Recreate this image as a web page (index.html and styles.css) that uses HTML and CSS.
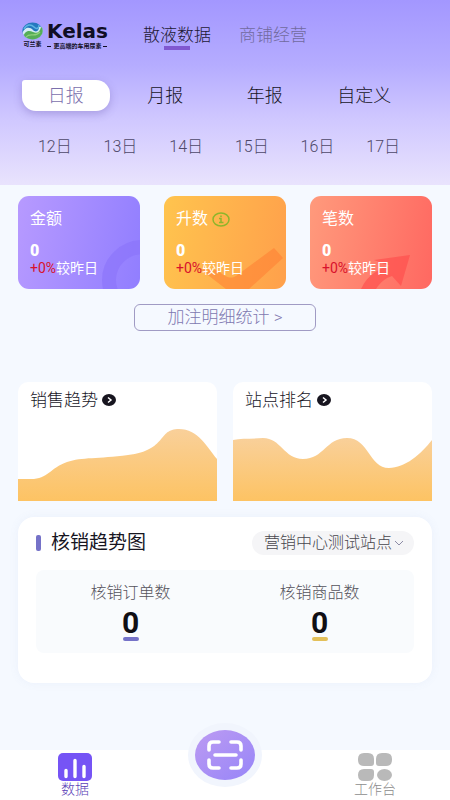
FILE: index.html
```html
<!DOCTYPE html>
<html lang="zh-CN">
<head>
<meta charset="utf-8">
<meta name="viewport" content="width=device-width, initial-scale=1">
<title>Kelas</title>
<link rel="stylesheet" href="styles.css">
</head>
<body>
<header class="hero">
  <div class="topbar">
    <div class="logo">
      <div class="logo-mark">
        <svg class="logo-globe" viewBox="0 0 21 18" aria-hidden="true">
          <defs><clipPath id="globe"><ellipse cx="10.500" cy="9" rx="10.200" ry="8.500"/></clipPath></defs>
          <g clip-path="url(#globe)">
            <rect width="21" height="18" fill="#2578bf"/>
            <path d="M0 12C3 4 8 5 11 8s6 1 6-3l4-1v14H0z" fill="#d4ecf5"/>
            <path d="M1 17C2 8 7 8 11 10s7 0 8-5l3 1v12H0z" fill="#55ad58"/>
            <path d="M2 7C5 2 9 2 12 5s5 1 5-2" fill="none" stroke="#5bb4e2" stroke-width="1.500"/>
            <path d="M4 15C8 10 13 16 18 10" fill="none" stroke="#8fd07a" stroke-width="1.200"/>
          </g>
        </svg>
        <span class="logo-small">可兰素</span>
      </div>
      <div class="logo-words">
        <span class="logo-name">Kelas</span>
        <span class="logo-small logo-slogan">更高端的车用尿素</span>
      </div>
    </div>
    <nav class="sections">
      <a class="section is-active" href="#data">散液数据</a>
      <a class="section" href="#shop">商铺经营</a>
    </nav>
  </div>
  <div class="periods">
    <button class="period is-active" type="button">日报</button>
    <button class="period" type="button">月报</button>
    <button class="period" type="button">年报</button>
    <button class="period" type="button">自定义</button>
  </div>
  <div class="days">
    <button class="day" type="button">12日</button>
    <button class="day" type="button">13日</button>
    <button class="day" type="button">14日</button>
    <button class="day" type="button">15日</button>
    <button class="day" type="button">16日</button>
    <button class="day" type="button">17日</button>
  </div>
</header>

<main class="content">
  <section class="stats">
    <article class="stat stat-amount">
      <svg class="stat-art" viewBox="0 0 122 93" preserveAspectRatio="none" aria-hidden="true"><ellipse cx="125" cy="84" rx="34" ry="33" fill="none" stroke="#8a73fa" stroke-opacity=".6" stroke-width="14"/></svg>
      <h2 class="stat-title">金额</h2>
      <strong class="stat-value">0</strong>
      <p class="stat-change"><span class="delta">+0%</span>较昨日</p>
    </article>
    <article class="stat stat-litres">
      <svg class="stat-art" viewBox="0 0 122 93" preserveAspectRatio="none" aria-hidden="true"><path d="M36 73L62 93H85L119 62L110 52L72 80C66 84 60 80 53 74z" fill="#ff7a2f" fill-opacity=".5"/></svg>
      <h2 class="stat-title">升数
        <svg class="info" viewBox="0 0 18 15" aria-hidden="true"><ellipse cx="9" cy="7.500" rx="8" ry="6.500"/><path d="M7 6.500h2v4M7 10.500h4.500M9 3.500v1.500"/></svg>
      </h2>
      <strong class="stat-value">0</strong>
      <p class="stat-change"><span class="delta">+0%</span>较昨日</p>
    </article>
    <article class="stat stat-count">
      <svg class="stat-art" viewBox="0 0 122 93" preserveAspectRatio="none" aria-hidden="true"><path d="M51 93C58 78 70 72 80 70L64 64L100 59L91 90L82 80C75 82 70 87 66 93z" fill="#ff4a4a" fill-opacity=".6"/></svg>
      <h2 class="stat-title">笔数</h2>
      <strong class="stat-value">0</strong>
      <p class="stat-change"><span class="delta">+0%</span>较昨日</p>
    </article>
  </section>

  <a class="detail-link" href="#details">加注明细统计 &gt;</a>

  <section class="charts">
    <a class="chart" href="#sales">
      <h2 class="chart-title">销售趋势
        <svg class="go" viewBox="0 0 14 12" aria-hidden="true"><ellipse cx="7" cy="6" rx="7" ry="6"/><path d="M6 3.500L9 6L6 8.500"/></svg>
      </h2>
      <svg class="chart-area" viewBox="0 0 199 73" preserveAspectRatio="none" aria-hidden="true">
        <defs><linearGradient id="fill" x1="0" y1="0" x2="0" y2="1"><stop offset="0" stop-color="#f9d09a"/><stop offset="1" stop-color="#fdc363"/></linearGradient></defs>
        <path fill="url(#fill)" d="M0 51H13C30 51 32 40 49 34C64 29 80 31 110 27C150 22 139 1 161 1C180 1 189 19 199 31V73H0z"/>
      </svg>
    </a>
    <a class="chart" href="#ranking">
      <h2 class="chart-title">站点排名
        <svg class="go" viewBox="0 0 14 12" aria-hidden="true"><ellipse cx="7" cy="6" rx="7" ry="6"/><path d="M6 3.500L9 6L6 8.500"/></svg>
      </h2>
      <svg class="chart-area" viewBox="0 0 199 73" preserveAspectRatio="none" aria-hidden="true">
        <path fill="url(#fill)" d="M0 12C8 10 18 11 30 10C48 10 51 31 70 31C91 31 93 10 114 10C136 10 136 40 156 40C172 40 188 26 199 12V73H0z"/>
      </svg>
    </a>
  </section>

  <section class="panel">
    <div class="panel-head">
      <h2 class="panel-title">核销趋势图</h2>
      <div class="picker">
        <select class="picker-select" aria-label="站点"><option>营销中心测试站点</option></select>
        <svg class="picker-arrow" viewBox="0 0 10 6" aria-hidden="true"><path d="M1 1l4 4l4-4"/></svg>
      </div>
    </div>
    <div class="totals">
      <div class="total">
        <span class="total-label">核销订单数</span>
        <strong class="total-value">0</strong>
      </div>
      <div class="total total-goods">
        <span class="total-label">核销商品数</span>
        <strong class="total-value">0</strong>
      </div>
    </div>
  </section>
</main>

<nav class="tabbar">
  <a class="tab is-active" href="#data">
    <svg class="tab-icon" viewBox="0 0 34 28" aria-hidden="true"><rect width="34" height="28" rx="5" fill="#7654f5"/><path d="M8 17.500v6M17 7.500v16M26 13.500v10" fill="none" stroke="#fff" stroke-width="3.400" stroke-linecap="round"/></svg>
    数据
  </a>
  <button class="scan" type="button" aria-label="扫码">
    <svg class="scan-icon" viewBox="0 0 74 64" aria-hidden="true">
      <defs><linearGradient id="scan" x1="0" y1="0" x2="1" y2="1"><stop offset="0" stop-color="#bc9bf2"/><stop offset="1" stop-color="#9785f8"/></linearGradient></defs>
      <ellipse cx="37" cy="32" rx="37" ry="32" fill="#f1f5fd"/>
      <ellipse cx="37" cy="32" rx="30" ry="25" fill="url(#scan)"/>
      <path d="M31 19H25Q21 19 21 23V27M43 19H49Q53 19 53 23V27M31 45H25Q21 45 21 41V37M43 45H49Q53 45 53 41V37M27 32H48" fill="none" stroke="#fff" stroke-width="3.600" stroke-linecap="round"/>
    </svg>
  </button>
  <a class="tab" href="#workbench">
    <svg class="tab-icon" viewBox="0 0 34 28" aria-hidden="true"><g fill="#b9b9b9"><path d="M6 0H10Q16 0 16 6V10Q16 13 13 13H6Q0 13 0 7V6Q0 0 6 0z"/><path d="M24 0H28Q34 0 34 6V7Q34 13 28 13H21Q18 13 18 10V6Q18 0 24 0z"/><path d="M6 16H13Q16 16 16 19V22Q16 28 10 28H6Q0 28 0 22Q0 16 6 16z"/><ellipse cx="26.500" cy="22" rx="7.500" ry="6"/></g></svg>
    工作台
  </a>
</nav>
</body>
</html>
```
FILE: styles.css
```css
* {
  box-sizing: border-box;
}

body {
  margin: 0;
  min-height: 100vh;
  display: flex;
  flex-direction: column;
  background: #f5f9ff;
  color: #17151f;
  font-family: Roboto, "Noto Sans CJK SC", sans-serif;
  font-size: 16px;
  font-weight: 300;
}

a {
  color: inherit;
  text-decoration: none;
}

button {
  border: 0;
  padding: 0;
  background: none;
  color: inherit;
  font: inherit;
  cursor: pointer;
}

h2,
p {
  margin: 0;
  font-weight: inherit;
}

svg {
  display: block;
}

/* Header */

.hero {
  padding: 20px 34px 28px 16px;
  background: linear-gradient(#a397ff, #b5acff 35%, #d0c8ff 65%, #e9e3fd);
}

.topbar {
  display: flex;
  gap: 35px;
  height: 30px;
  padding-left: 6px;
}

.logo {
  display: flex;
  gap: 4px;
  color: #100e24;
}

.logo-mark,
.logo-words {
  display: flex;
  flex-direction: column;
  align-items: center;
}

.logo-mark {
  padding-top: 2px;
}

.logo-globe {
  width: 21px;
  height: 18px;
}

.logo-name {
  font: bold 20px/22px "DejaVu Sans", sans-serif;
}

.logo-small {
  font-size: 6px;
  font-weight: 700;
  line-height: 8px;
  white-space: nowrap;
}

.logo-slogan {
  display: flex;
  align-items: center;
  gap: 2px;
}

.logo-slogan::before,
.logo-slogan::after {
  content: "";
  width: 4px;
  height: 1px;
  background: currentColor;
}

.sections {
  display: flex;
  gap: 28px;
  padding-top: 4px;
}

.section {
  display: flex;
  flex-direction: column;
  align-items: center;
  height: 26px;
  font-size: 17px;
  line-height: 22px;
  color: #716a9e;
}

.section.is-active {
  color: #1d1934;
}

.section.is-active::after {
  content: "";
  width: 26px;
  height: 4px;
  background: #8058d0;
}

.periods {
  display: grid;
  grid-template-columns: repeat(4, 1fr);
  justify-items: center;
  margin: 30px 2px 0 0;
}

.period {
  width: 88px;
  height: 31px;
  border-radius: 3px 14px 14px 14px;
  font-size: 18px;
  line-height: 31px;
}

.period.is-active {
  background: #fff;
  color: #7b70ad;
  box-shadow: 0 3px 8px rgba(90, 70, 160, .3);
}

.days {
  display: grid;
  grid-template-columns: repeat(6, 1fr);
  margin: 26px 0 0 6px;
}

.day {
  line-height: 20px;
  color: #4e4868;
}

/* Summary cards */

.content {
  padding: 11px 18px 32px;
}

.stats {
  display: grid;
  grid-template-columns: repeat(3, 1fr);
  gap: 24px;
}

.stat {
  position: relative;
  overflow: hidden;
  padding: 12px;
  border-radius: 11px;
  color: #fff;
  font-weight: 400;
}

.stat-amount {
  background: linear-gradient(100deg, #b79aff, #917eff);
}

.stat-litres {
  background: linear-gradient(100deg, #ffc44e, #ffa04b);
}

.stat-count {
  background: linear-gradient(100deg, #ff9a7c, #ff6861);
}

.stat-art {
  position: absolute;
  inset: 0;
  width: 100%;
  height: 100%;
}

.stat-title,
.stat-value,
.stat-change {
  position: relative;
}

.stat-title {
  display: flex;
  align-items: center;
  gap: 4px;
  font-size: 16px;
  line-height: 22px;
}

.info {
  width: 18px;
  height: 15px;
  fill: none;
  stroke: #8fb52b;
  stroke-width: 1.5;
}

.stat-value {
  display: block;
  margin-top: 12px;
  font-size: 16px;
  font-weight: 900;
  line-height: 17px;
}

.stat-change {
  font-size: 14px;
  line-height: 18px;
  white-space: nowrap;
}

.delta {
  color: #d8122c;
}

.detail-link {
  display: block;
  width: 44%;
  margin: 15px auto 0;
  border: 1px solid #a09bc4;
  border-radius: 6px;
  color: #8078b0;
  font-size: 17px;
  line-height: 25px;
  text-align: center;
  white-space: nowrap;
}

/* Chart cards */

.charts {
  display: grid;
  grid-template-columns: repeat(2, 1fr);
  gap: 16px;
  margin-top: 51px;
}

.chart {
  overflow: hidden;
  border-radius: 10px 10px 0 0;
  background: #fff;
}

.chart-title {
  display: flex;
  align-items: center;
  gap: 4px;
  padding: 7px 12px 17px;
  font-size: 17px;
  line-height: 22px;
}

.go {
  width: 14px;
  height: 12px;
  fill: #17151f;
}

.go path {
  fill: none;
  stroke: #fff;
  stroke-width: 1.5;
}

.chart-area {
  width: 100%;
  height: 73px;
}

/* Write-off panel */

.panel {
  margin-top: 16px;
  padding: 14px 18px 30px;
  border-radius: 16px;
  background: #fff;
  box-shadow: 0 0 10px rgba(120, 140, 200, .08);
}

.panel-head {
  display: flex;
  align-items: center;
  justify-content: space-between;
}

.panel-title {
  display: flex;
  align-items: center;
  gap: 10px;
  font-size: 19px;
  font-weight: 400;
  line-height: 24px;
}

.panel-title::before {
  content: "";
  width: 5px;
  height: 16px;
  border-radius: 2px;
  background: #7572c8;
}

.picker {
  position: relative;
}

.picker-select {
  display: block;
  width: 162px;
  height: 24px;
  padding: 0 0 0 12px;
  border: 0;
  border-radius: 12px;
  background: #f5f5f7;
  color: #47454d;
  font: inherit;
  line-height: 24px;
  appearance: none;
}

.picker-arrow {
  position: absolute;
  top: 9px;
  right: 10px;
  width: 10px;
  height: 6px;
  fill: none;
  stroke: #8d8ca6;
  pointer-events: none;
}

.totals {
  display: grid;
  grid-template-columns: repeat(2, 1fr);
  margin-top: 15px;
  padding: 12px 0;
  border-radius: 8px;
  background: #f9fbfd;
}

.total {
  display: flex;
  flex-direction: column;
  align-items: center;
}

.total-label {
  color: #55535c;
  line-height: 22px;
}

.total-value {
  margin-top: 4px;
  color: #100f14;
  font-size: 30px;
  font-weight: 700;
  line-height: 29px;
}

.total::after {
  content: "";
  width: 16px;
  height: 4px;
  border-radius: 2px;
  background: #7572c8;
}

.total-goods::after {
  background: #e3c05a;
}

/* Bottom navigation */

.tabbar {
  display: grid;
  grid-template-columns: repeat(3, 1fr);
  margin-top: auto;
  padding: 3px 0 2px;
  background: #fff;
}

.tab {
  display: flex;
  flex-direction: column;
  align-items: center;
  color: #8d8d8d;
  font-size: 14px;
  line-height: 17px;
}

.tab.is-active {
  color: #5b3fb8;
}

.tab-icon {
  width: 34px;
  height: 28px;
}

.scan {
  justify-self: center;
  height: 34px;
  margin-top: -30px;
}

.scan-icon {
  width: 74px;
  height: 64px;
}
```
